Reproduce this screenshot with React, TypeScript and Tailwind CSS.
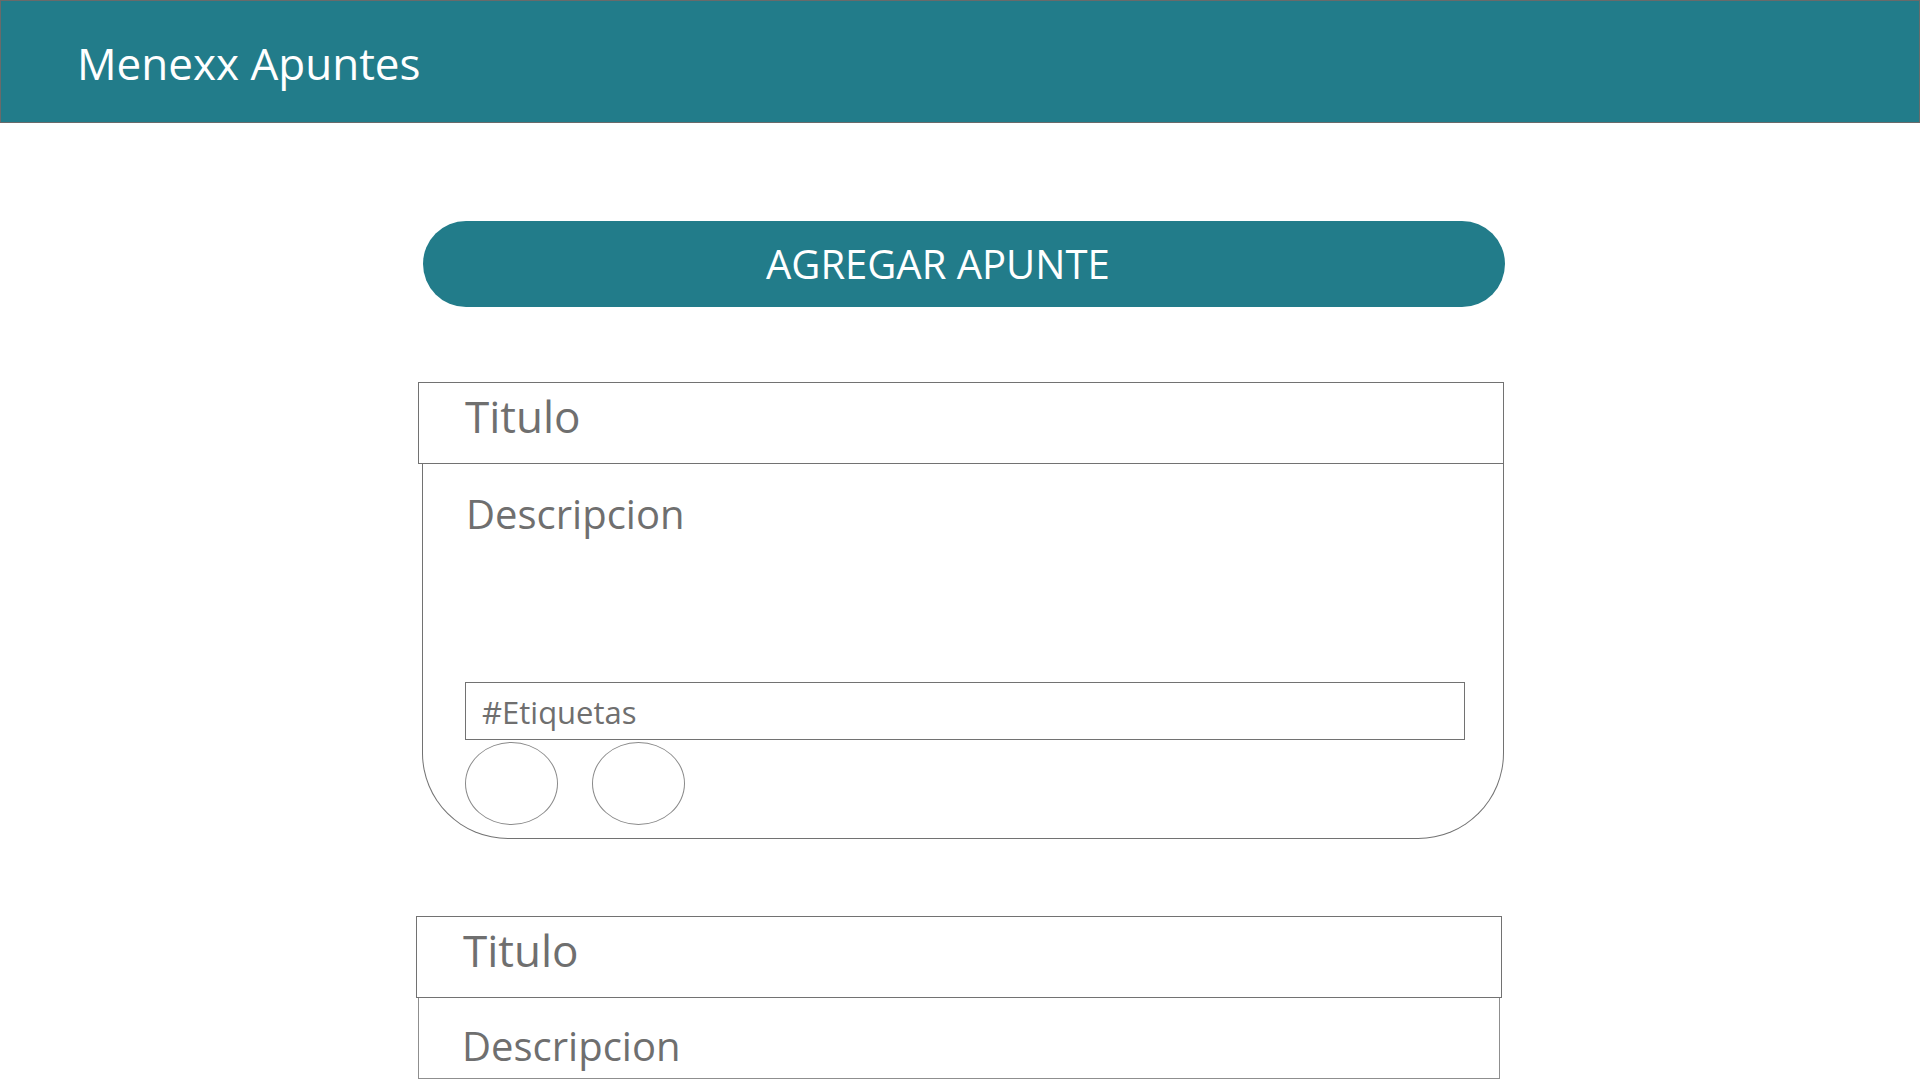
import React from "react";

const font = { fontFamily: '"Open Sans", "Noto Sans", sans-serif' };

const NoteCard = ({
  withTags,
  offset,
}: {
  withTags?: boolean;
  offset: "first" | "second";
}) => {
  const first = offset === "first";
  return (
    <div className={first ? "ml-[418px] w-[1086px]" : "ml-[416px] w-[1086px]"}>
      {/* Title */}
      <div className="h-[82px] border border-[#727272] pl-[46px] pt-[11px]">
        <span className="block text-[44px] leading-none text-[#6f6f6f]">
          Titulo
        </span>
      </div>

      {/* Description */}
      <div
        className={
          first
            ? "ml-[4px] w-[1082px] border-x border-b border-[#727272] rounded-b-[86px] px-[42px] pt-[30px] pb-[13px]"
            : "ml-[2px] w-[1082px] h-[81px] border-x border-b border-[#8f8f8f] px-[42px] pt-[28px]"
        }
      >
        <span className="block pl-[1px] text-[40px] leading-none text-[#6f6f6f]">
          Descripcion
        </span>

        {withTags && (
          <>
            <div className="mt-[148px] h-[58px] w-[1000px] border border-[#727272] pl-[16px] pt-[14px]">
              <span className="block text-[31px] leading-none text-[#6f6f6f]">
                #Etiquetas
              </span>
            </div>
            <div className="mt-[2px] flex gap-[34px]">
              <div className="h-[83px] w-[93px] rounded-[50%] border border-[#8a8a8a]" />
              <div className="h-[83px] w-[93px] rounded-[50%] border border-[#8a8a8a]" />
            </div>
          </>
        )}
      </div>
    </div>
  );
};

export default function App() {
  return (
    <div className="h-[1080px] w-[1920px] overflow-hidden bg-white" style={font}>
      {/* Header */}
      <header className="h-[123px] bg-[#227c8a] border border-[#6a6a6a] pl-[76px] pt-[40px]">
        <h1 className="text-[44px] leading-none font-normal text-white">
          Menexx Apuntes
        </h1>
      </header>

      <main className="flex flex-col">
        <button className="ml-[423px] mt-[98px] flex h-[86px] w-[1082px] items-center rounded-full bg-[#227c8a] pl-[343px] text-[40px] leading-none text-white">
          AGREGAR APUNTE
        </button>

        <div className="mt-[75px]">
          <NoteCard offset="first" withTags />
        </div>

        <div className="mt-[77px]">
          <NoteCard offset="second" />
        </div>
      </main>
    </div>
  );
}
